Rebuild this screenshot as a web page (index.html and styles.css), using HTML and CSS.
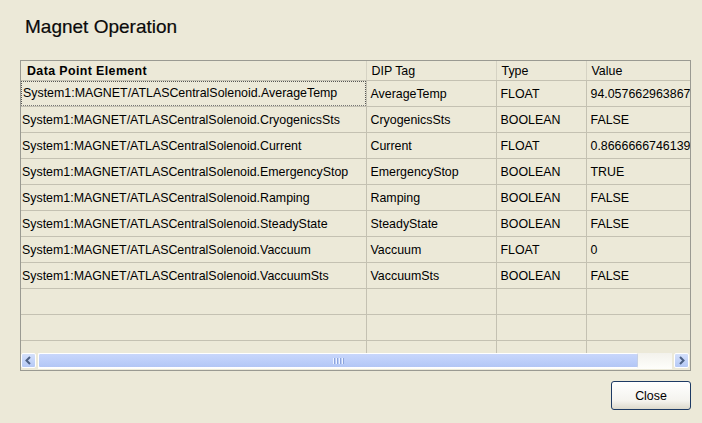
FILE: index.html
```html
<!DOCTYPE html>
<html>
<head>
<meta charset="utf-8">
<link rel="stylesheet" href="styles.css">
</head>
<body>
<div class="dialog">
  <h1 class="title">Magnet Operation</h1>
  <div class="panel">
    <div class="viewport">
      <table class="grid">
        <colgroup>
          <col class="c1"><col class="c2"><col class="c3"><col class="c4">
        </colgroup>
        <thead>
          <tr>
            <th class="bold">Data Point Element</th>
            <th>DIP Tag</th>
            <th>Type</th>
            <th>Value</th>
          </tr>
        </thead>
        <tbody>
          <tr><td class="focus"><span>System1:MAGNET/ATLASCentralSolenoid.AverageTemp</span></td><td>AverageTemp</td><td>FLOAT</td><td>94.057662963867</td></tr>
          <tr><td>System1:MAGNET/ATLASCentralSolenoid.CryogenicsSts</td><td>CryogenicsSts</td><td>BOOLEAN</td><td>FALSE</td></tr>
          <tr><td>System1:MAGNET/ATLASCentralSolenoid.Current</td><td>Current</td><td>FLOAT</td><td>0.8666666746139</td></tr>
          <tr><td>System1:MAGNET/ATLASCentralSolenoid.EmergencyStop</td><td>EmergencyStop</td><td>BOOLEAN</td><td>TRUE</td></tr>
          <tr><td>System1:MAGNET/ATLASCentralSolenoid.Ramping</td><td>Ramping</td><td>BOOLEAN</td><td>FALSE</td></tr>
          <tr><td>System1:MAGNET/ATLASCentralSolenoid.SteadyState</td><td>SteadyState</td><td>BOOLEAN</td><td>FALSE</td></tr>
          <tr><td>System1:MAGNET/ATLASCentralSolenoid.Vaccuum</td><td>Vaccuum</td><td>FLOAT</td><td>0</td></tr>
          <tr><td>System1:MAGNET/ATLASCentralSolenoid.VaccuumSts</td><td>VaccuumSts</td><td>BOOLEAN</td><td>FALSE</td></tr>
          <tr class="empty"><td></td><td></td><td></td><td></td></tr>
          <tr class="empty"><td></td><td></td><td></td><td></td></tr>
          <tr class="empty"><td></td><td></td><td></td><td></td></tr>
        </tbody>
      </table>
    </div>
    <div class="hscroll">
      <div class="sbtn"><svg width="9" height="9" viewBox="0 0 9 9"><path d="M6 1 L2.5 4.5 L6 8" fill="none" stroke="#4d6185" stroke-width="2"/></svg></div>
      <div class="track">
        <div class="thumb"><span class="grip"><i></i><i></i><i></i><i></i></span></div>
      </div>
      <div class="sbtn"><svg width="9" height="9" viewBox="0 0 9 9"><path d="M3 1 L6.5 4.5 L3 8" fill="none" stroke="#4d6185" stroke-width="2"/></svg></div>
    </div>
  </div>
  <div class="actions">
    <button class="btn">Close</button>
  </div>
</div>
</body>
</html>
```

FILE: styles.css
```css
html, body {
  margin: 0;
  padding: 0;
  background: #ECE9D8;
}
body {
  width: 702px;
  height: 423px;
  overflow: hidden;
  font-family: "Liberation Sans", Arial, sans-serif;
  color: #000;
}
.dialog {
  padding: 16px 0 0 20px;
}
.title {
  margin: 0 0 0 5px;
  height: 44px;
  font-size: 19px;
  font-weight: normal;
  line-height: 22px;
  color: #0a0a0a;
  -webkit-text-stroke: 0.2px #0a0a0a;
}
.panel {
  width: 669px;
  height: 309px;
  border: 1px solid #9a9a92;
  display: flex;
  flex-direction: column;
  background: #ECE9D8;
}
.viewport {
  height: 292px;
  overflow: hidden;
}
.grid {
  border-collapse: collapse;
  table-layout: fixed;
  width: 720px;
  font-size: 12.4px;
}
.c1 { width: 345px; }
.c2 { width: 130px; }
.c3 { width: 90px; }
.c4 { width: 155px; }
.grid th {
  height: 19px;
  padding: 0 0 0 5px;
  text-align: left;
  font-weight: normal;
  border-bottom: 1px solid #c4c1b2;
  border-left: 1px solid #d6d3c4;
  white-space: nowrap;
  overflow: hidden;
  vertical-align: middle;
}
.grid th:first-child { border-left: none; padding-left: 6px; }
.grid th.bold { font-weight: bold; letter-spacing: 0.4px; }
.grid td {
  height: 25px;
  padding: 0 0 0 4px;
  border-bottom: 1px solid #c4c1b2;
  border-left: 1px solid #c4c1b2;
  white-space: nowrap;
  overflow: hidden;
  vertical-align: middle;
}
.grid td:first-child {
  border-left: none;
  padding-left: 1px;
}
.grid td.focus {
  padding: 0;
}
.grid td.focus span {
  display: block;
  height: 23px;
  line-height: 23px;
  padding-left: 1px;
  border: 1px dotted #555;
  border-bottom-color: #777;
  overflow: hidden;
}
.hscroll {
  height: 16px;
  display: flex;
  padding: 0 1px 0 0;
}
.sbtn {
  width: 15px;
  height: 15px;
  border: 1px solid #ffffff;
  box-sizing: border-box;
  background: linear-gradient(#d4e0fb, #b5c9f6);
  border-radius: 2px;
  display: flex;
  align-items: center;
  justify-content: center;
}
.track {
  flex: 1;
  margin: 0 2px;
  background: linear-gradient(#f3f2ec, #fefefb);
  display: flex;
}
.thumb {
  width: 600px;
  height: 15px;
  box-sizing: border-box;
  border: 1px solid #fff;
  border-right-color: #c4cfe6;
  background: linear-gradient(#c8d6fb, #bbcdf9 60%, #b3c6f5);
  border-radius: 2px;
  display: flex;
  align-items: center;
  justify-content: center;
}
.grip {
  display: flex;
  gap: 1px;
}
.grip i {
  width: 1px;
  height: 6px;
  background: #eef3ff;
  border-right: 1px solid #8ca4dc;
}
.actions {
  display: flex;
  justify-content: flex-end;
  width: 671px;
  padding-top: 10px;
}
.btn {
  width: 80px;
  height: 29px;
  border: 1px solid #1d3a64;
  border-radius: 3px;
  background: linear-gradient(#ffffff, #f4f3ee 70%, #dcd9cc);
  font-family: "Liberation Sans", Arial, sans-serif;
  font-size: 12.4px;
  color: #000;
  padding: 0;
}
```
